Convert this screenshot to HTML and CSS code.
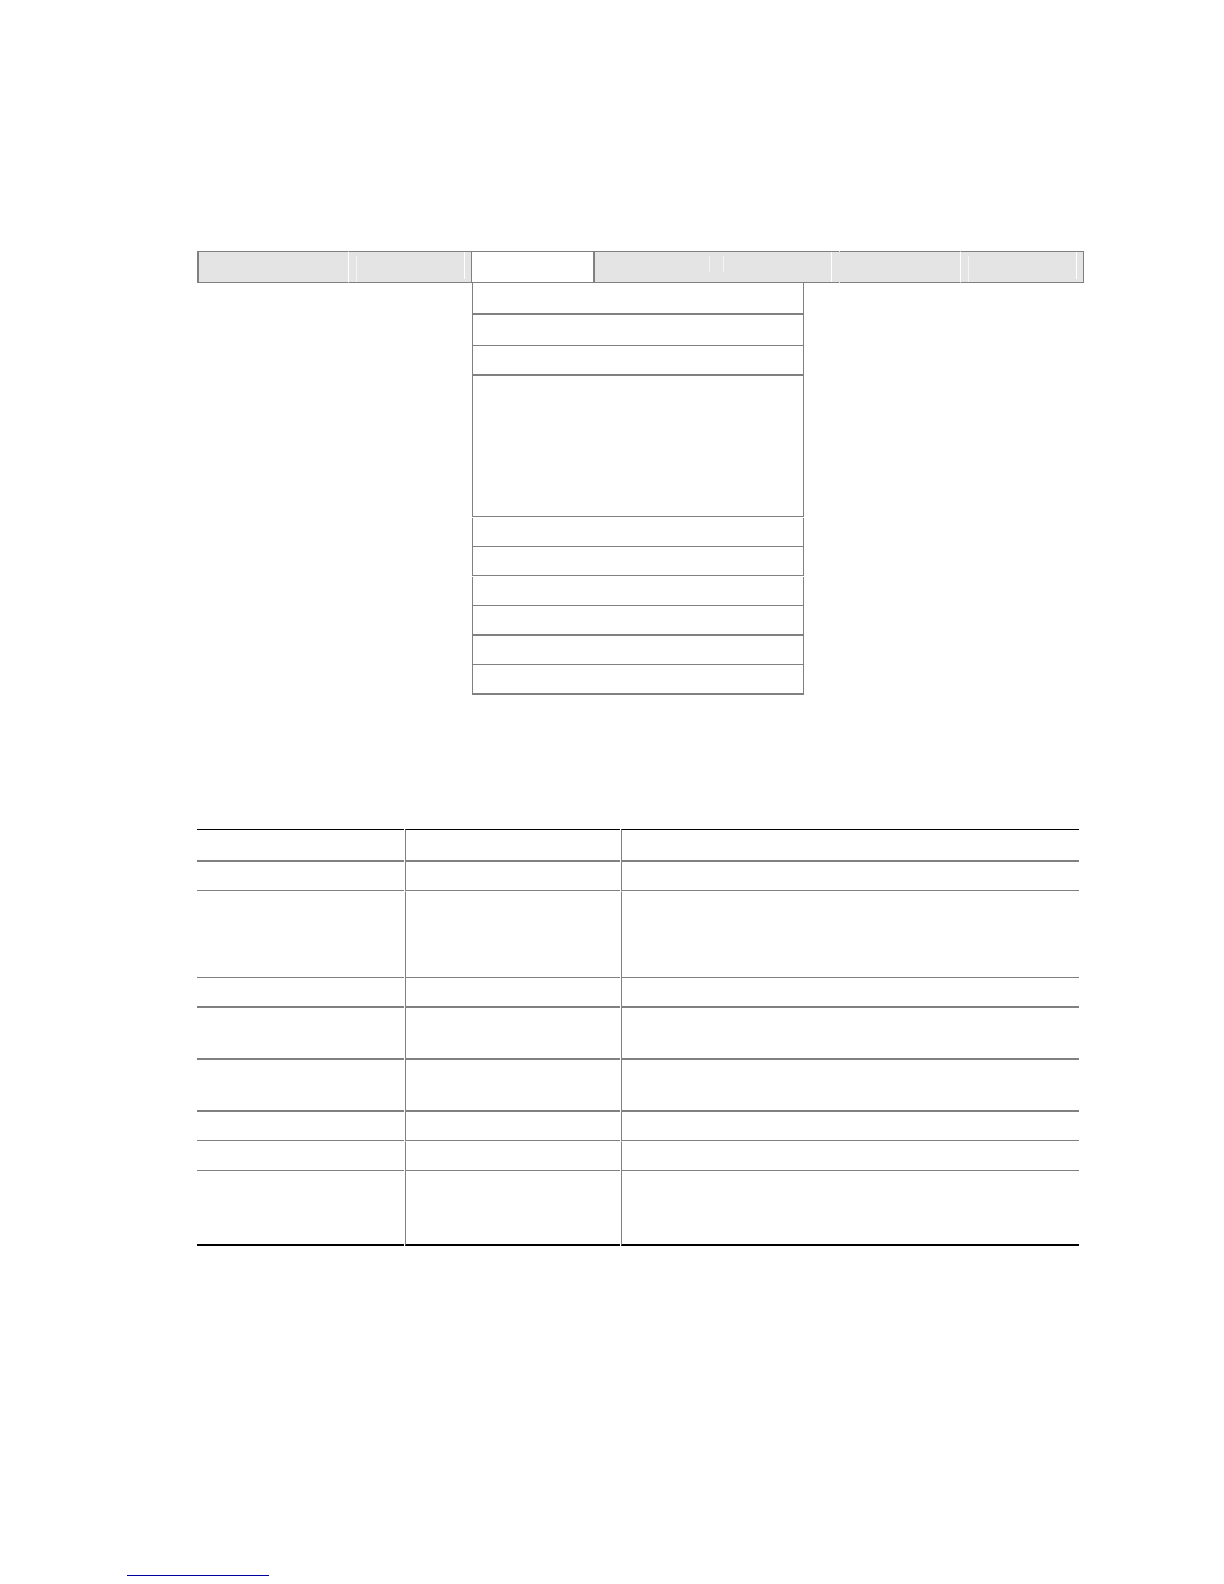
FILE: index.html
```
<!DOCTYPE html>
<html lang="en">
<head>
    <meta charset="UTF-8">
    <title>Menu Reference</title>
    <link rel="stylesheet" href="styles.css">
</head>
<body>
    <div class="page">
        <div class="menu-bar">
            <div class="menu-cell first"></div>
            <div class="menu-cell split inset-left inset-right edge"></div>
            <div class="menu-cell selected"></div>
            <div class="menu-cell after-selected inset-right"></div>
            <div class="menu-cell inset-left short inset-right"></div>
            <div class="menu-cell notch"></div>
            <div class="menu-cell split inset-left inset-right edge"></div>
        </div>

        <div class="submenu-row">
            <ul class="submenu">
                <li class="title thick"></li>
                <li class="title"></li>
                <li class="thick"></li>
                <li class="tall"></li>
                <li class="gap"></li>
                <li></li>
                <li class="gap"></li>
                <li class="thick"></li>
                <li></li>
                <li class="thick"></li>
            </ul>
        </div>

        <table class="details-table">
            <colgroup>
                <col class="col-feature">
                <col class="col-options">
                <col>
            </colgroup>
            <thead>
                <tr><th></th><th></th><th></th></tr>
            </thead>
            <tbody>
                <tr><td></td><td></td><td></td></tr>
                <tr class="lines-4 open"><td></td><td></td><td></td></tr>
                <tr class="thick"><td></td><td></td><td></td></tr>
                <tr class="lines-2 thick"><td></td><td></td><td></td></tr>
                <tr class="lines-2 thick"><td></td><td></td><td></td></tr>
                <tr><td></td><td></td><td></td></tr>
                <tr class="open"><td></td><td></td><td></td></tr>
                <tr class="lines-3 last"><td></td><td></td><td></td></tr>
            </tbody>
        </table>
    </div>

    <div class="footer">
        <a href="#" class="footer-link" aria-label="Back to top"></a>
    </div>
</body>
</html>
```

FILE: styles.css
```
* {
    box-sizing: border-box;
}
body {
    font-family: "Liberation Sans", Arial, sans-serif;
    margin: 0;
    padding: 0;
    background-color: #fff;
}
.page {
    padding: 251px 140px 0 197px;
}

/* Menu bar */
.menu-bar {
    display: grid;
    grid-template-columns: 151fr 124fr 121fr 123fr 123fr 121fr 124fr;
    height: 32px;
    background-color: #e4e4e4;
}
.menu-cell {
    display: flex;
    justify-content: space-between;
    border-top: 1px solid #808080;
    border-bottom: 1px solid #808080;
}
.first,
.after-selected {
    border-left: 2px solid #808080;
}
.split {
    border-left: 1px solid #fff;
}
.edge {
    border-right: 1px solid #808080;
}
.selected {
    background-color: #fff;
}
.notch {
    margin-left: 1px;
}
.inset-left::before,
.inset-right::after {
    content: "";
    width: 1px;
    background-color: #f4f4f4;
}
.inset-left::before {
    margin: 4px 0 0 7px;
}
.inset-right::after {
    margin: 0 6px 3px auto;
    background-color: #fff;
}
.after-selected::after,
.short::before {
    margin-top: 4px;
    margin-bottom: 10px;
    background-color: #f4f4f4;
}
.short::after {
    margin-right: 7px;
    margin-bottom: 0;
}

/* Open submenu */
.submenu-row {
    display: grid;
    grid-template-columns: 275fr 332fr 280fr;
}
.submenu {
    grid-column: 2;
    list-style: none;
    margin: 0;
    padding: 0;
}
.submenu li {
    height: 29px;
    border: 1px solid #808080;
    border-top: none;
}
.submenu .thick {
    height: 30px;
    border-bottom-width: 2px;
}
.submenu .title {
    height: 31px;
}
.submenu .title.thick {
    height: 32px;
}
.submenu .tall {
    height: 141px;
}
.submenu .gap {
    margin-top: 1px;
}

/* Details table */
.details-table {
    width: calc(100% - 3px);
    margin: 134px 0 0 -1px;
    table-layout: fixed;
    border-collapse: separate;
    border-spacing: 1px 0;
}
.col-feature {
    width: 207px;
}
.col-options {
    width: 215px;
}
.details-table th,
.details-table td {
    height: 29px;
    padding: 0;
    border-bottom: 1px solid #808080;
}
.details-table th + th,
.details-table td + td {
    border-left: 1px solid #808080;
}
.details-table th {
    height: 33px;
    border-top: 1px solid #000;
    border-bottom-width: 2px;
}
.details-table .thick td {
    height: 30px;
    border-bottom-width: 2px;
}
.details-table .open td {
    height: 30px;
    border-top: 1px solid #fff;
}
.details-table .lines-2 td {
    height: 52px;
}
.details-table .lines-3 td {
    height: 75px;
}
.details-table .lines-4 td {
    height: 87px;
}
.details-table .last td {
    border-bottom: 2px solid #000;
}

.footer {
    padding: 309px 127px 8px;
}
.footer-link {
    display: block;
    width: 142px;
    height: 21px;
    border-bottom: 1px solid #0000a0;
}
```
